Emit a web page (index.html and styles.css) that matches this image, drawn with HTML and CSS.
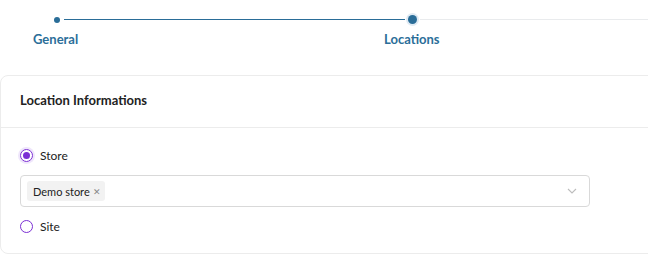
FILE: index.html
```html
<!DOCTYPE html>
<html>
<head>
<meta charset="utf-8">
<link rel="stylesheet" href="styles.css">
</head>
<body>
<div class="stepper">
  <div class="track">
    <span class="dot done"></span>
    <span class="line done"></span>
    <span class="dot active"></span>
    <span class="line"></span>
  </div>
  <div class="labels">
    <span class="label">General</span>
    <span class="label">Locations</span>
  </div>
</div>
<div class="card">
  <div class="card-head">Location Informations</div>
  <div class="card-body">
    <label class="radio-row">
      <span class="radio checked"></span>
      <span>Store</span>
    </label>
    <div class="select">
      <span class="tag">Demo store <span class="x">✕</span></span>
      <svg class="chev" width="10" height="6" viewBox="0 0 10 6"><path d="M1 1l4 4 4-4" fill="none" stroke="#bdbdbd" stroke-width="1.1"/></svg>
    </div>
    <label class="radio-row">
      <span class="radio"></span>
      <span>Site</span>
    </label>
  </div>
</div>
</body>
</html>
```
FILE: styles.css
```css
* { box-sizing: border-box; }
body {
  margin: 0;
  font-family: "Lato", "Open Sans", sans-serif;
  background: #fff;
  overflow: hidden;
}
.stepper { height: 75px; padding-top: 15px; }
.track {
  display: flex;
  align-items: center;
  height: 9px;
  padding-left: 54px;
}
.dot { border-radius: 50%; background: #2a6d98; flex: none; }
.dot.done { width: 6px; height: 6px; }
.dot.active { width: 9px; height: 9px; margin: 0 3px; box-shadow: 0 0 0 2px #dfeaf3; }
.line { height: 1px; background: #e9ebed; flex: 1; }
.line.done { flex: 0 0 341px; background: #2a6d98; margin-left: 4px; height: 1.5px; }
.labels {
  display: grid;
  grid-template-columns: 351px auto;
  padding-left: 33px;
  margin-top: 7px;
}
.label { color: #2b6e99; font-size: 13px; font-weight: 700; }
.card {
  width: 670px;
  border: 1px solid #ececec;
  border-radius: 8px;
}
.card-head {
  height: 52px;
  border-bottom: 1px solid #ececec;
  display: flex;
  align-items: center;
  padding: 0 0 3px 19px;
  font-size: 13px;
  font-weight: 700;
  color: #222;
}
.card-body { padding: 17px 0 17px 19px; }
.radio-row {
  display: flex;
  align-items: center;
  gap: 7px;
  height: 20px;
  font-size: 12px;
  color: #222;
}
.radio {
  width: 13px;
  height: 13px;
  border: 1.5px solid #7b2fd4;
  border-radius: 50%;
  display: flex;
  align-items: center;
  justify-content: center;
}
.radio.checked { box-shadow: 0 0 0 2px #efe6fb; }
.radio.checked::after {
  content: "";
  width: 7px;
  height: 7px;
  border-radius: 50%;
  background: #7b2fd4;
}
.select {
  width: 570px;
  height: 32px;
  margin: 10px 0 9px;
  border: 1px solid #d9d9d9;
  border-radius: 4px;
  display: flex;
  align-items: center;
  justify-content: space-between;
  padding: 0 12px 0 6px;
}
.tag {
  background: #f2f2f2;
  border-radius: 3px;
  height: 20px;
  padding: 0 4px 0 6px;
  display: flex;
  align-items: center;
  gap: 3px;
  font-size: 11px;
  color: #222;
}
.x { font-size: 9px; color: #888; }
```
